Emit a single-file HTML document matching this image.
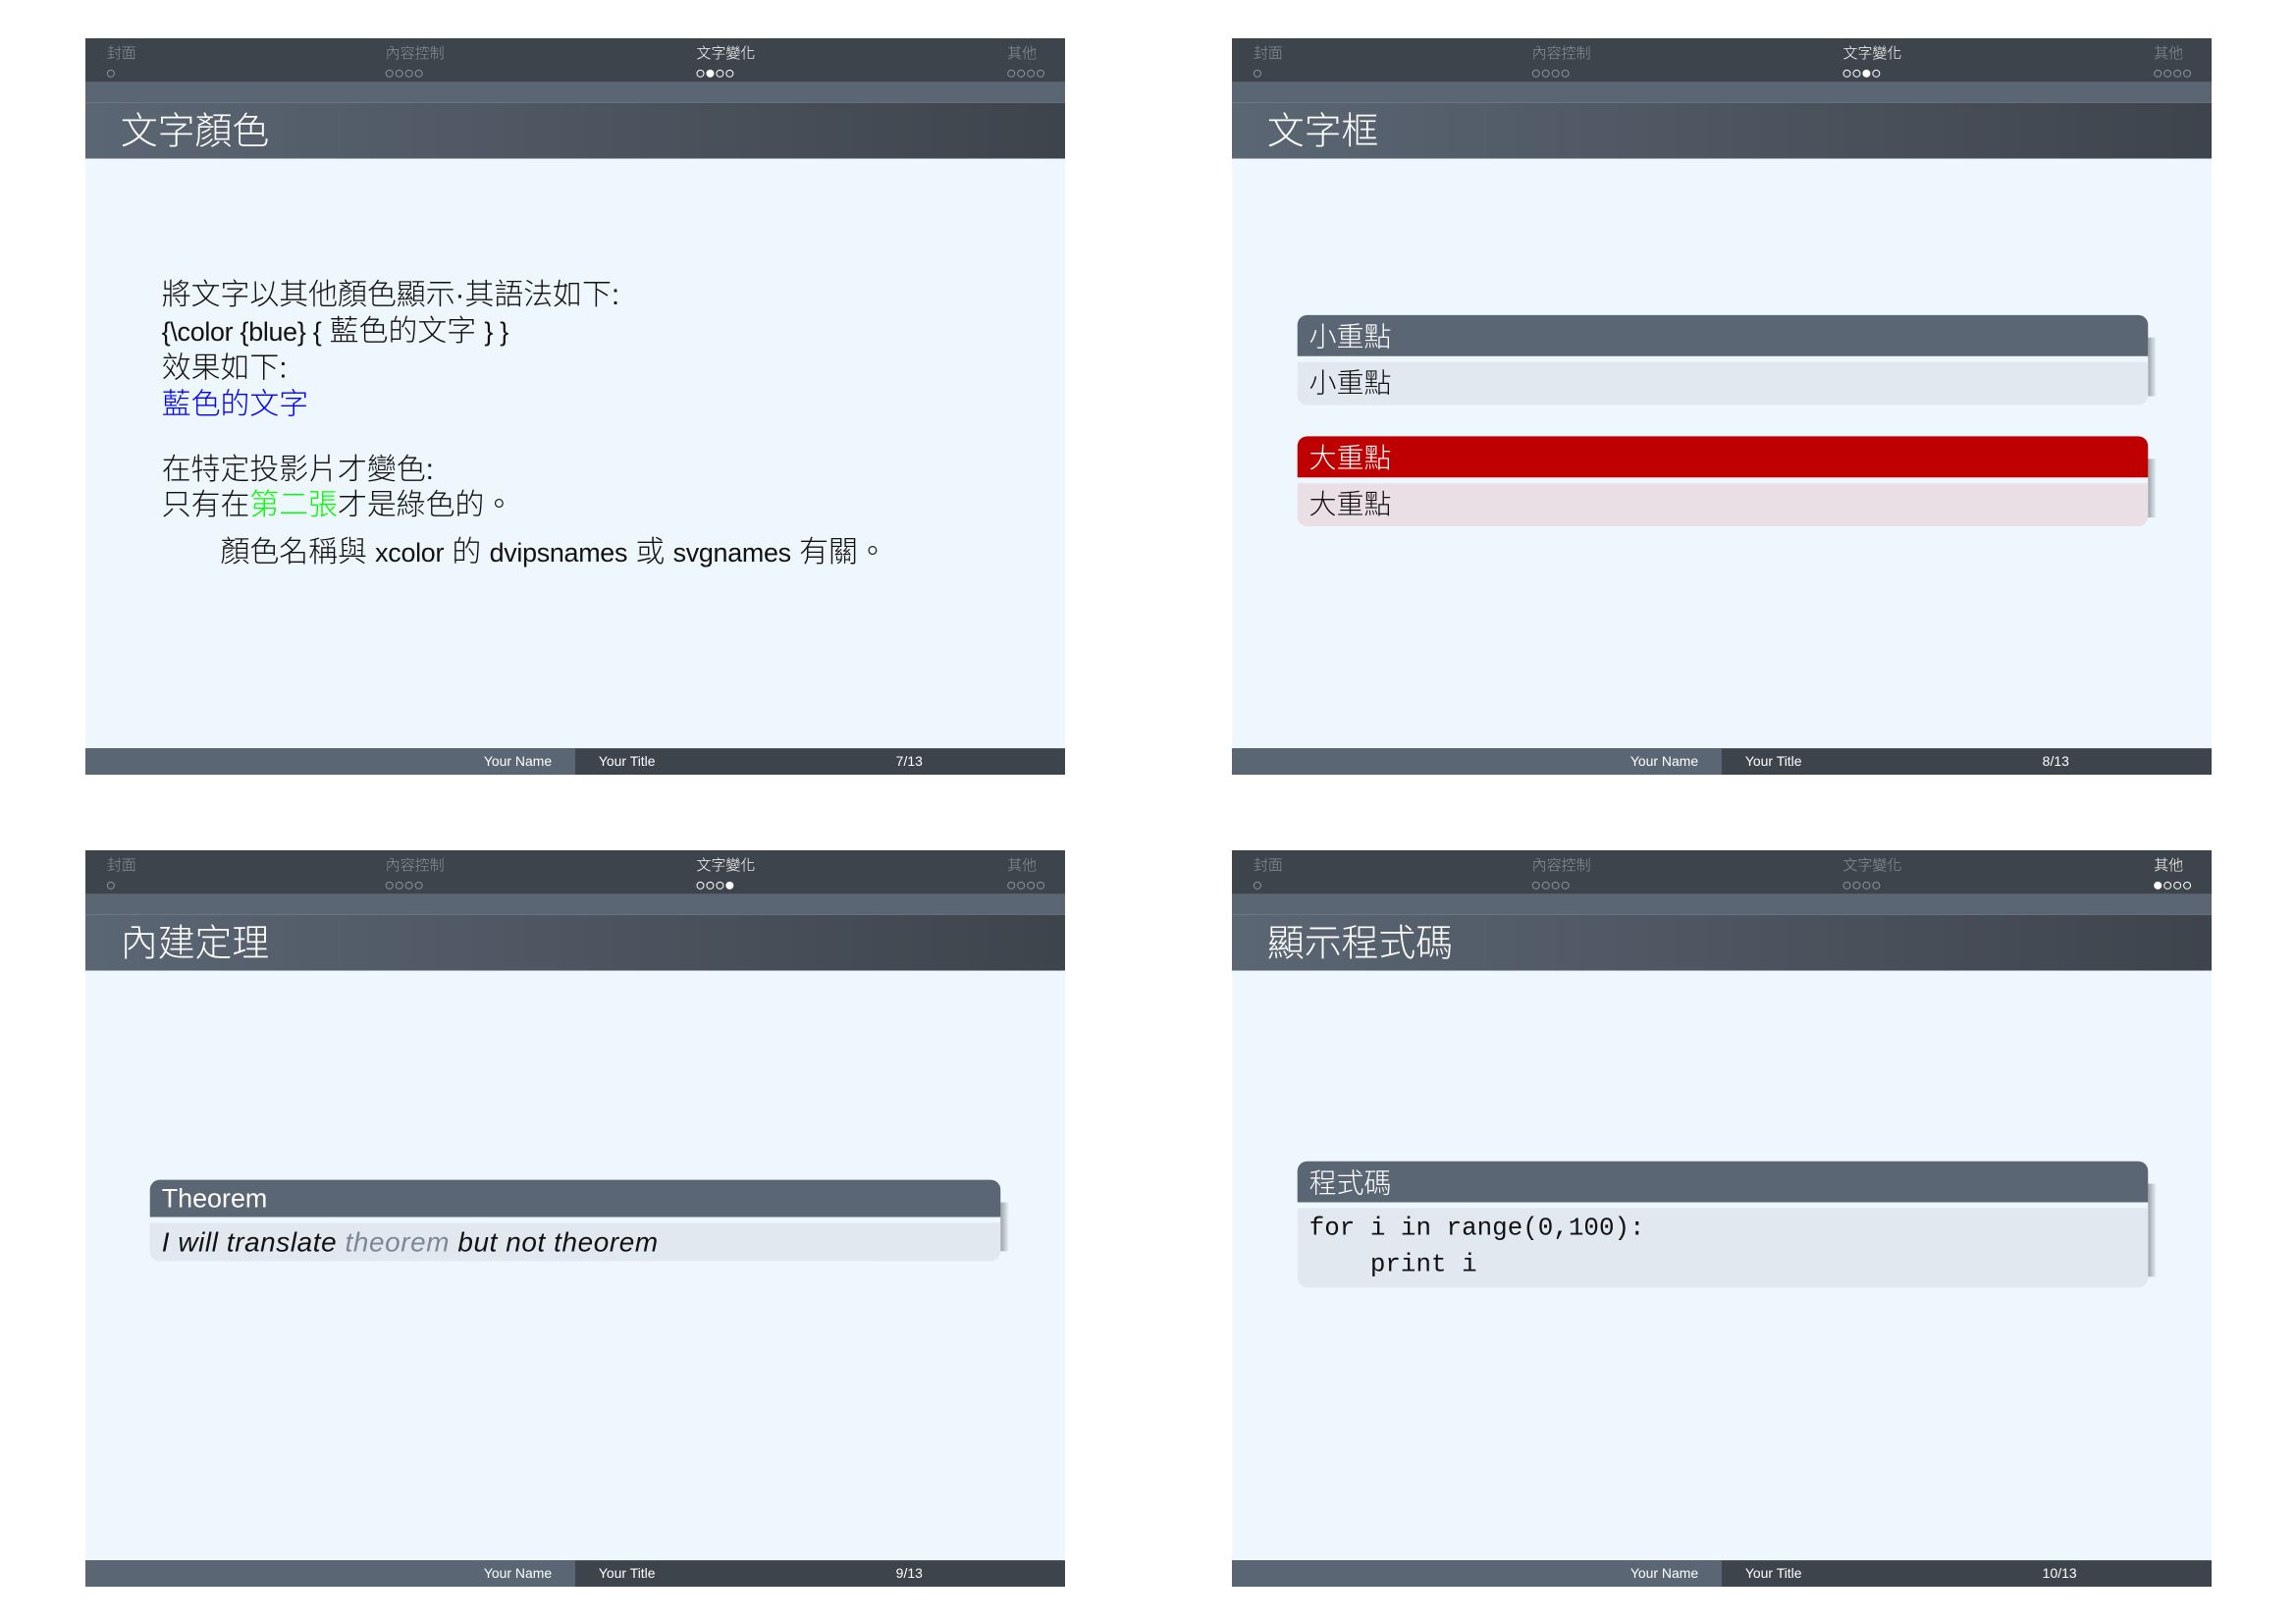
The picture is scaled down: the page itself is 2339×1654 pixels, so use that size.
<!DOCTYPE html>
<html><head><meta charset="utf-8"><style>
*{margin:0;padding:0;box-sizing:border-box}
body{width:2339px;height:1654px;background:#fff;position:relative;overflow:hidden;font-family:"Liberation Sans","Noto Sans CJK TC",sans-serif}
.s{position:absolute;width:1002px;height:753px;background:#eef6fe;overflow:hidden;transform:scale(0.996);transform-origin:0 0}
.nav{position:absolute;left:0;top:0;width:100%;height:45px;background:#3e444c}
.strip{position:absolute;left:0;top:45px;width:100%;height:21px;background:#5b6674}
.tb{position:absolute;left:0;top:66px;width:100%;height:57px;background:linear-gradient(90deg,#5b6674,#3e444c)}
.tt{position:absolute;left:36px;top:63px;height:57px;line-height:57px;color:#fff;font-size:38px;font-weight:300;font-family:"Noto Sans CJK TC",sans-serif}
.ni{position:absolute;top:6px;font-size:15px;color:#8a919a;line-height:18px;font-family:"Noto Sans CJK TC",sans-serif;font-weight:300}
.ni.a{color:#fff}
.dots{position:absolute;top:26px;display:flex;gap:2px}
.d{width:8px;height:8px;border:1.3px solid #8a919a;border-radius:50%}
.a .d{border-color:#fff}.a .d.f{background:#fff}
.ft{position:absolute;left:0;top:726px;width:100%;height:27px;background:#3e444c;color:#fff;font-size:14px;line-height:27px}
.ft .l{position:absolute;left:0;top:0;width:501px;height:27px;background:#5b6674}
.ft span{position:absolute;top:0}
.tx{position:absolute;left:78px;font-size:30px;line-height:37px;color:#111;white-space:nowrap;font-weight:300;font-family:"Liberation Sans","Noto Sans CJK TC",sans-serif}
.lt{font-size:27px;letter-spacing:-0.3px}
.blk{position:absolute;width:870px}
.bh{position:absolute;left:0;top:0;width:100%;height:42px;background:#5b6674;border-radius:10px 10px 0 0;color:#fff;font-size:28px;line-height:42px;padding-left:12px;font-weight:300;font-family:"Noto Sans CJK TC",sans-serif}
.bb{position:absolute;left:0;width:100%;background:#e1e8f0;border-radius:0 0 10px 10px;font-size:28px;padding-left:12px;color:#111;font-weight:300}
.sh{position:absolute;width:8px;background:linear-gradient(90deg,#9aa2ab,#e6ecf2)}
</style></head><body>

<!-- Slide 1 -->
<div class="s" style="left:87px;top:39px">
<div class="nav"></div><div class="strip"></div><div class="tb"></div>
<div class="ni" style="left:22px">封面<div class="dots" style="left:0"><div class="d"></div></div></div>
<div class="ni" style="left:307px">內容控制<div class="dots"><div class="d"></div><div class="d"></div><div class="d"></div><div class="d"></div></div></div>
<div class="ni a" style="left:625px">文字變化<div class="dots"><div class="d"></div><div class="d f"></div><div class="d"></div><div class="d"></div></div></div>
<div class="ni" style="left:943px">其他<div class="dots"><div class="d"></div><div class="d"></div><div class="d"></div><div class="d"></div></div></div>
<div class="tt">文字顏色</div>
<div class="tx" style="top:244px">將文字以其他顏色顯示·其語法如下:</div>
<div class="tx" style="top:281px"><span class="lt">{\color {blue} {</span> 藍色的文字 <span class="lt">} }</span></div>
<div class="tx" style="top:319px">效果如下:</div>
<div class="tx" style="top:356px;color:#0000ff">藍色的文字</div>
<div class="tx" style="top:423px">在特定投影片才變色:</div>
<div class="tx" style="top:459px">只有在<span style="color:#00ff00">第二張</span>才是綠色的。</div>
<div class="tx" style="top:507px;left:138px">顏色名稱與 <span class="lt">xcolor</span> 的 <span class="lt">dvipsnames</span> 或 <span class="lt">svgnames</span> 有關。</div>
<div class="ft"><div class="l"></div><span style="right:525px">Your Name</span><span style="left:525px">Your Title</span><span style="left:829px">7/13</span></div>
</div>

<!-- Slide 2 -->
<div class="s" style="left:1255px;top:39px">
<div class="nav"></div><div class="strip"></div><div class="tb"></div>
<div class="ni" style="left:22px">封面<div class="dots"><div class="d"></div></div></div>
<div class="ni" style="left:307px">內容控制<div class="dots"><div class="d"></div><div class="d"></div><div class="d"></div><div class="d"></div></div></div>
<div class="ni a" style="left:625px">文字變化<div class="dots"><div class="d"></div><div class="d"></div><div class="d f"></div><div class="d"></div></div></div>
<div class="ni" style="left:943px">其他<div class="dots"><div class="d"></div><div class="d"></div><div class="d"></div><div class="d"></div></div></div>
<div class="tt">文字框</div>
<div class="sh" style="left:937px;top:306px;height:60px"></div>
<div class="blk" style="left:67px;top:283px"><div class="bh">小重點</div><div class="bb" style="top:48px;height:44px;line-height:44px">小重點</div></div>
<div class="sh" style="left:937px;top:430px;height:60px"></div>
<div class="blk" style="left:67px;top:407px"><div class="bh" style="background:#bf0000">大重點</div><div class="bb" style="top:48px;height:44px;line-height:44px;background:#ebdfe6">大重點</div></div>
<div class="ft"><div class="l"></div><span style="right:525px">Your Name</span><span style="left:525px">Your Title</span><span style="left:829px">8/13</span></div>
</div>

<!-- Slide 3 -->
<div class="s" style="left:87px;top:866px">
<div class="nav"></div><div class="strip"></div><div class="tb"></div>
<div class="ni" style="left:22px">封面<div class="dots"><div class="d"></div></div></div>
<div class="ni" style="left:307px">內容控制<div class="dots"><div class="d"></div><div class="d"></div><div class="d"></div><div class="d"></div></div></div>
<div class="ni a" style="left:625px">文字變化<div class="dots"><div class="d"></div><div class="d"></div><div class="d"></div><div class="d f"></div></div></div>
<div class="ni" style="left:943px">其他<div class="dots"><div class="d"></div><div class="d"></div><div class="d"></div><div class="d"></div></div></div>
<div class="tt">內建定理</div>
<div class="sh" style="left:936px;top:360px;height:50px"></div>
<div class="blk" style="left:66px;top:337px"><div class="bh" style="height:38px;line-height:38px;font-family:'Liberation Sans',sans-serif;font-size:27px">Theorem</div><div class="bb" style="top:44px;height:39px;line-height:39px;font-style:italic;font-size:28px;letter-spacing:0.6px">I will translate <span style="color:#7d8896">theorem</span> but not theorem</div></div>
<div class="ft"><div class="l"></div><span style="right:525px">Your Name</span><span style="left:525px">Your Title</span><span style="left:829px">9/13</span></div>
</div>

<!-- Slide 4 -->
<div class="s" style="left:1255px;top:866px">
<div class="nav"></div><div class="strip"></div><div class="tb"></div>
<div class="ni" style="left:22px">封面<div class="dots"><div class="d"></div></div></div>
<div class="ni" style="left:307px">內容控制<div class="dots"><div class="d"></div><div class="d"></div><div class="d"></div><div class="d"></div></div></div>
<div class="ni" style="left:625px">文字變化<div class="dots"><div class="d"></div><div class="d"></div><div class="d"></div><div class="d"></div></div></div>
<div class="ni a" style="left:943px">其他<div class="dots"><div class="d f"></div><div class="d"></div><div class="d"></div><div class="d"></div></div></div>
<div class="tt">顯示程式碼</div>
<div class="sh" style="left:937px;top:341px;height:95px"></div>
<div class="blk" style="left:67px;top:318px"><div class="bh">程式碼</div><div class="bb" style="top:48px;height:81px;padding-top:2px;font-family:'Liberation Mono',monospace;font-size:26px;line-height:37px;white-space:pre;font-weight:400">for i in range(0,100):
    print i</div></div>
<div class="ft"><div class="l"></div><span style="right:525px">Your Name</span><span style="left:525px">Your Title</span><span style="left:829px">10/13</span></div>
</div>

</body></html>
